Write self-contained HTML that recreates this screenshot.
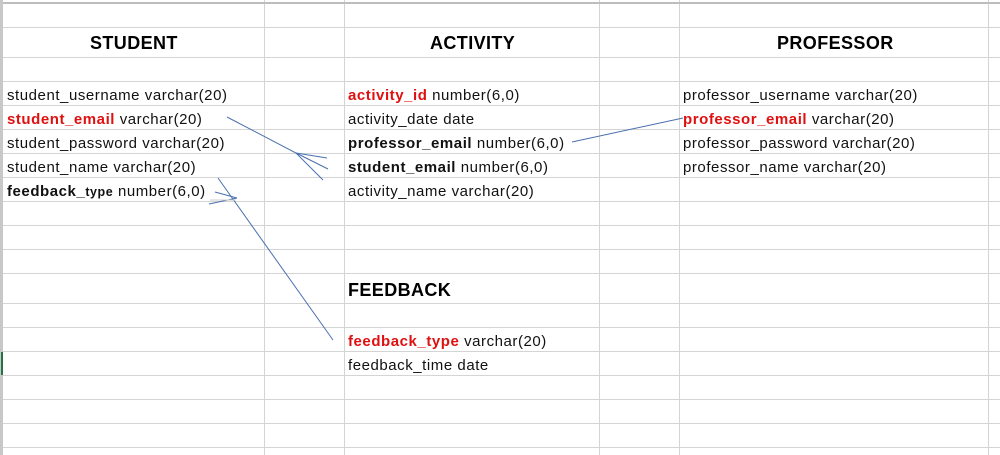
<!DOCTYPE html>
<html><head><meta charset="utf-8"><style>
body{margin:0;width:1000px;height:455px;overflow:hidden;background:#fff;font-family:"Liberation Sans",Arial,sans-serif;position:relative}
.t{position:absolute;font-size:15px;letter-spacing:0.55px;color:#111;white-space:nowrap;line-height:18px}
.h{position:absolute;font-size:18px;letter-spacing:0.4px;font-weight:bold;color:#000;white-space:nowrap}
.r{color:#e01010;font-weight:bold}
.b{font-weight:bold}
</style></head><body>
<svg width="1000" height="455" style="position:absolute;left:0;top:0">
<g stroke="#d4d4d4" stroke-width="1">
<line x1="0" y1="27.5" x2="1000" y2="27.5"/><line x1="0" y1="57.5" x2="1000" y2="57.5"/>
<line x1="0" y1="81.5" x2="1000" y2="81.5"/><line x1="0" y1="105.5" x2="1000" y2="105.5"/>
<line x1="0" y1="129.5" x2="1000" y2="129.5"/><line x1="0" y1="153.5" x2="1000" y2="153.5"/>
<line x1="0" y1="177.5" x2="1000" y2="177.5"/><line x1="0" y1="201.5" x2="1000" y2="201.5"/>
<line x1="0" y1="225.5" x2="1000" y2="225.5"/><line x1="0" y1="249.5" x2="1000" y2="249.5"/>
<line x1="0" y1="273.5" x2="1000" y2="273.5"/><line x1="0" y1="303.5" x2="1000" y2="303.5"/>
<line x1="0" y1="327.5" x2="1000" y2="327.5"/><line x1="0" y1="351.5" x2="1000" y2="351.5"/>
<line x1="0" y1="375.5" x2="1000" y2="375.5"/><line x1="0" y1="399.5" x2="1000" y2="399.5"/>
<line x1="0" y1="423.5" x2="1000" y2="423.5"/><line x1="0" y1="447.5" x2="1000" y2="447.5"/>
<line x1="264.5" y1="0" x2="264.5" y2="455"/><line x1="344.5" y1="0" x2="344.5" y2="455"/>
<line x1="599.5" y1="0" x2="599.5" y2="455"/><line x1="679.5" y1="0" x2="679.5" y2="455"/>
<line x1="988.5" y1="0" x2="988.5" y2="455"/>
</g>
<line x1="0" y1="3" x2="1000" y2="3" stroke="#bdbdbd" stroke-width="2"/>
<rect x="0" y="0" width="3" height="455" fill="#c8c8c8"/>
<rect x="1" y="352" width="2" height="23" fill="#217346"/>
<g stroke="#4a6fb0" stroke-width="1" fill="none">
<polyline points="227,117 296,153 323,180"/>
<line x1="296" y1="153" x2="327" y2="158"/><line x1="296" y1="153" x2="328" y2="169"/>
<line x1="218" y1="178" x2="333" y2="340"/>
<line x1="215" y1="192" x2="237" y2="198"/><line x1="209" y1="204" x2="237" y2="198"/>
<line x1="572" y1="142" x2="683" y2="118"/>
</g>
<line x1="210" y1="200" x2="236" y2="200" stroke="#ccc"/>
</svg>
<div class="h" style="left:90px;top:33px">STUDENT</div>
<div class="h" style="left:430px;top:33px">ACTIVITY</div>
<div class="h" style="left:777px;top:33px">PROFESSOR</div>
<div class="h" style="left:348px;top:280px">FEEDBACK</div>
<div class="t" style="left:7px;top:87px">student_username varchar(20)</div>
<div class="t" style="left:7px;top:111px"><span class="r">student_email</span> varchar(20)</div>
<div class="t" style="left:7px;top:135px">student_password varchar(20)</div>
<div class="t" style="left:7px;top:159px">student_name varchar(20)</div>
<div class="t" style="left:7px;top:183px"><span class="b">feedback_<span style="font-size:12.5px">type</span></span> number(6,0)</div>
<div class="t" style="left:348px;top:87px"><span class="r">activity_id</span> number(6,0)</div>
<div class="t" style="left:348px;top:111px">activity_date date</div>
<div class="t" style="left:348px;top:135px"><span class="b">professor_email</span> number(6,0)</div>
<div class="t" style="left:348px;top:159px"><span class="b">student_email</span> number(6,0)</div>
<div class="t" style="left:348px;top:183px">activity_name varchar(20)</div>
<div class="t" style="left:348px;top:333px"><span class="r">feedback_type</span> varchar(20)</div>
<div class="t" style="left:348px;top:357px">feedback_time date</div>
<div class="t" style="left:683px;top:87px">professor_username varchar(20)</div>
<div class="t" style="left:683px;top:111px"><span class="r">professor_email</span> varchar(20)</div>
<div class="t" style="left:683px;top:135px">professor_password varchar(20)</div>
<div class="t" style="left:683px;top:159px">professor_name varchar(20)</div>
</body></html>
